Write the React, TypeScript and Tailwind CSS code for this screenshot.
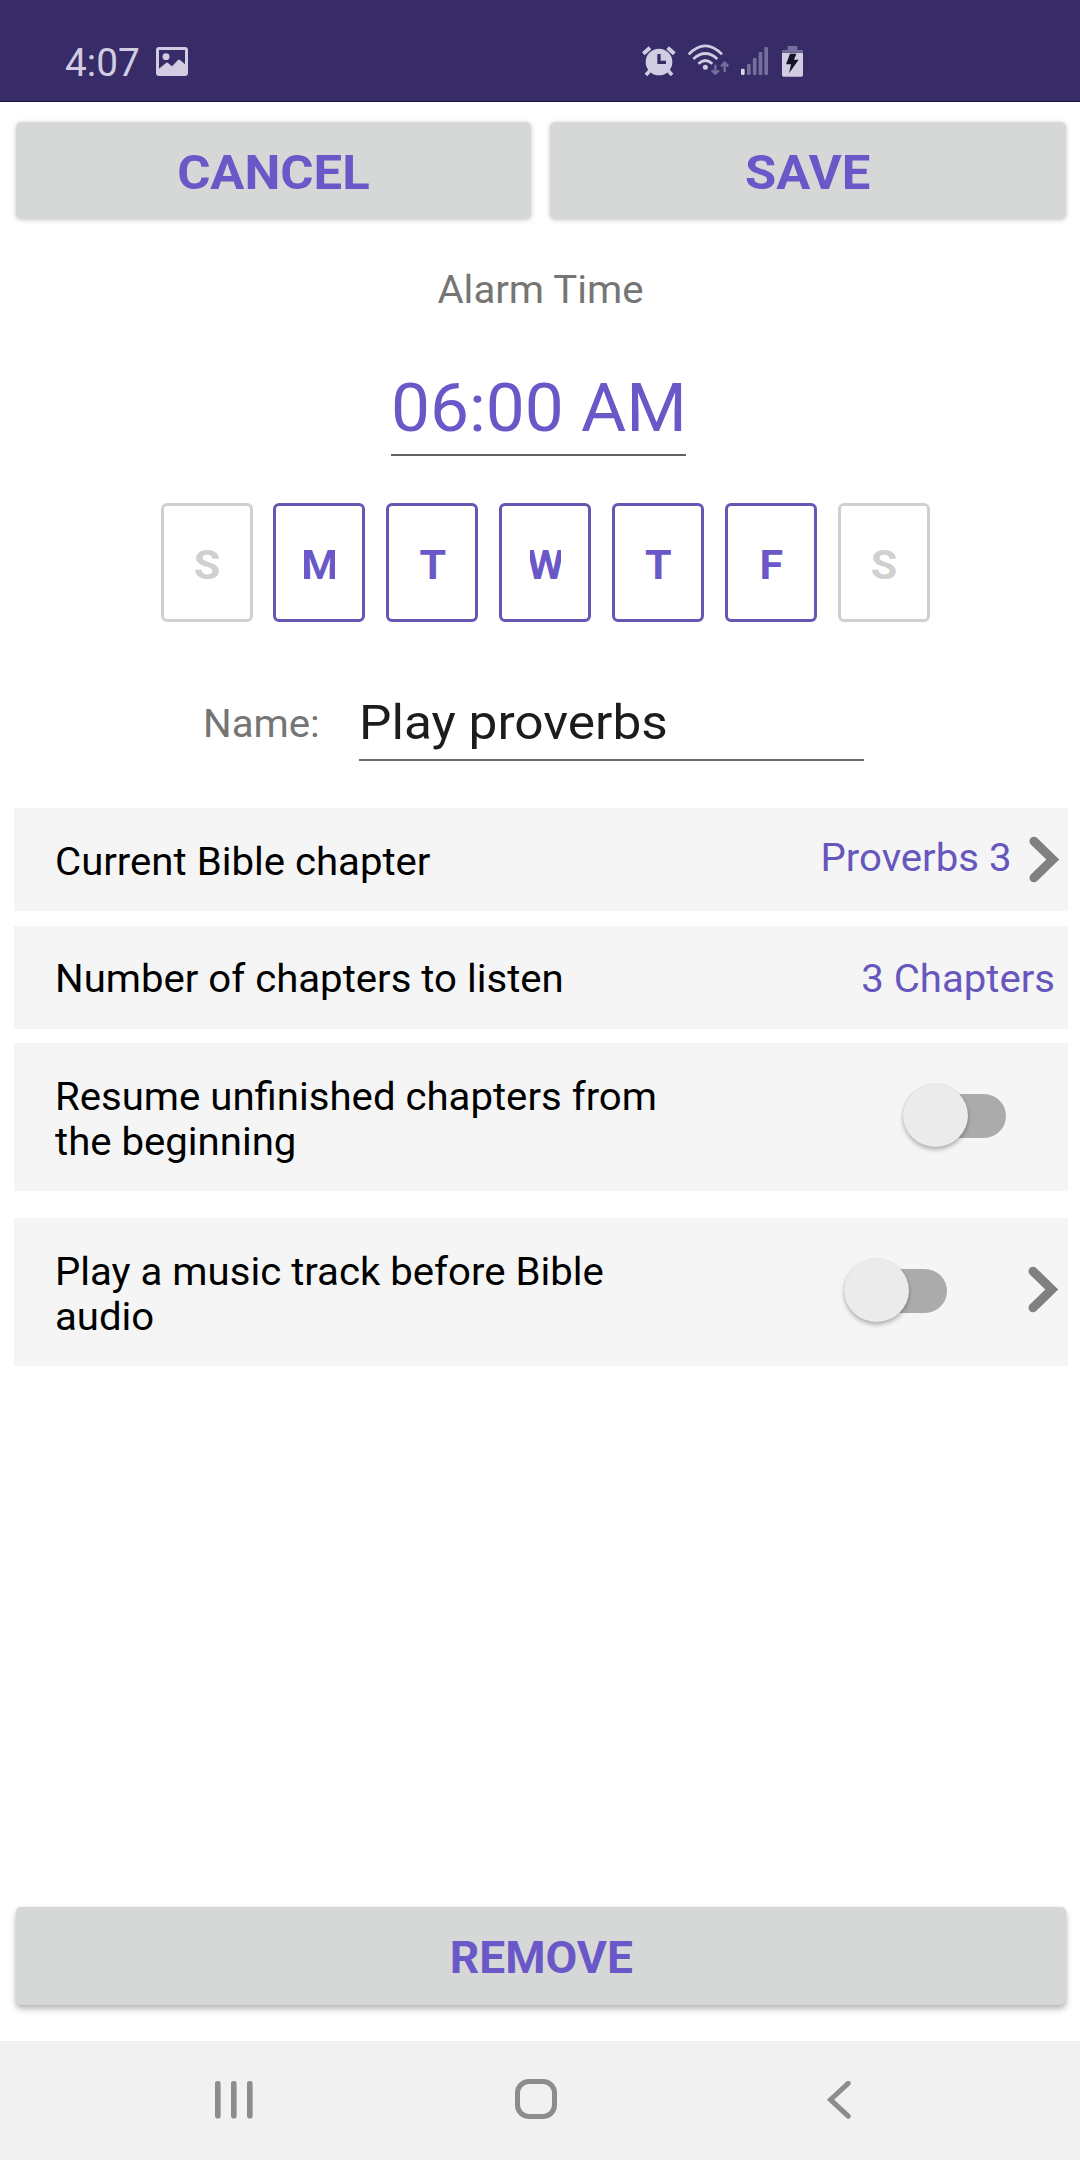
import React from "react";

const days = [
  { letter: "S", on: false },
  { letter: "M", on: true },
  { letter: "T", on: true },
  { letter: "W", on: true },
  { letter: "T", on: true },
  { letter: "F", on: true },
  { letter: "S", on: false },
];

function StatusBar() {
  return (
    <header className="flex h-[102px] shrink-0 items-start border-b border-[#1d1248] bg-[#372c67] pt-[30px] pl-[65px]">
      <span className="w-[91px] scale-y-[0.98] text-[38.8px] leading-[66px] text-[#d1cce1]">4:07</span>
      <svg className="mt-[17px] h-[29px] w-8" viewBox="0 0 32 29" fill="none">
        <rect x="1.5" y="1.5" width="29" height="26" rx="1.5" stroke="#d1cce1" strokeWidth="3" />
        <ellipse cx="10" cy="9.7" rx="3.5" ry="3.4" fill="#d1cce1" />
        <path d="M2 22.5 10 16 Q11 15.2 12 16 L16 19.3 22 13 Q23 12.2 24 13 L30 18 V27.5 H2 Z" fill="#d1cce1" />
      </svg>
      <svg className="ml-[432px] h-[60px] w-[200px]" viewBox="0 0 600 180" fill="none">
        <g stroke="#d1cce1">
          <path d="M70 71 90 53M163 71 143 53" strokeWidth="12" />
          <path d="M90 121 78 135M144 121 156 135" strokeWidth="11" />
        </g>
        <circle cx="117" cy="96" r="40" fill="#d1cce1" />
        <path d="M117 72V97H138" stroke="#372c67" strokeWidth="10" />
        <g stroke="#d1cce1" strokeWidth="8">
          <path d="M206 73Q256 22 306 73" />
          <path d="M220 87Q256 54 292 87" />
          <path d="M235 101Q256 82 277 101" />
        </g>
        <circle cx="256" cy="112" r="7.5" fill="#d1cce1" />
        <g stroke="#776f9b" strokeWidth="7">
          <path d="M286 104V131M275 121 286 131 297 121" />
          <path d="M314 126V99M303 109 314 98 325 109" />
        </g>
        <rect x="363" y="116" width="11" height="19" rx="4" fill="#d9d4e8" />
        <g fill="#776f9b">
          <rect x="381" y="101" width="11" height="34" rx="4" />
          <rect x="398.5" y="84" width="11" height="51" rx="4" />
          <rect x="416" y="66" width="11" height="69" rx="4" />
          <rect x="433" y="51" width="11" height="84" rx="4" />
          <path d="M503 48H532V60H546Q549 60 549 64V68H486V64Q486 60 489 60H503Z" />
        </g>
        <path d="M486 69H549V135Q549 140 544 140H491Q486 140 486 135Z" fill="#d1cce1" />
        <path d="M510 71H529L522 89H536L507 130 513 103H498Z" fill="#15122a" />
      </svg>
    </header>
  );
}

function Chevron({ className }: { className: string }) {
  return (
    <svg className={`${className} h-[47px] w-[31px]`} viewBox="0 0 31 47" fill="none">
      <path d="M5 5.2 23.8 23.5 5 41.8" stroke="#808080" strokeWidth="9" strokeLinecap="round" strokeLinejoin="miter" />
    </svg>
  );
}

function Switch({ className }: { className: string }) {
  return (
    <div className={`${className} grid h-[63px] w-[103px] items-center`}>
      <div className="col-start-1 row-start-1 ml-[14px] h-11 rounded-full bg-[#ababab]" />
      <div className="col-start-1 row-start-1 h-[63px] w-[65px] rounded-[50%] bg-[#ebebeb] shadow-[0_3px_4px_rgba(0,0,0,0.26),0_0_2px_rgba(0,0,0,0.12)]" />
    </div>
  );
}

const topButton =
  "flex-1 rounded-[5px] bg-[#d6d8d7] pt-1.5 text-[50.8px] font-bold text-[#6a58c8] shadow-[0_1px_5px_rgba(0,0,0,0.22)]";
const label = "scale-y-[0.947] text-[40.15px] leading-[48px] text-black";
const value = "scale-y-[0.947] text-[40.15px] leading-[46px] text-[#6757bd]";
const row = "flex shrink-0 items-center bg-[#f5f5f5] pl-[41px]";

export default function App() {
  return (
    <div className="flex h-[2160px] w-[1080px] flex-col overflow-hidden bg-white font-[Roboto,sans-serif]">
      <StatusBar />

      <div className="mt-5 flex h-[97px] shrink-0 gap-[18.5px] pr-[14.5px] pl-[15.5px]">
        <button className={topButton}>
          <span className="block scale-y-[0.965]">CANCEL</span>
        </button>
        <button className={topButton}>
          <span className="block scale-y-[0.965]">SAVE</span>
        </button>
      </div>

      <div className="mt-[47px] h-[50px] shrink-0 scale-y-[0.947] pl-[1px] text-center text-[40.2px] leading-[50px] text-[#757575]">
        Alarm Time
      </div>

      <div className="mt-[47px] ml-[391px] h-[93px] w-[295px] shrink-0 border-b-2 border-[#626262]">
        <div className="scale-y-[0.947] text-[69.4px] leading-[92px] whitespace-nowrap text-[#6a58c8]">06:00 AM</div>
      </div>

      <div className="mt-[47px] ml-[160.6px] flex h-[119px] w-[769px] shrink-0 justify-between">
        {days.map((d, i) => (
          <div
            key={i}
            className={`flex w-[92px] items-center justify-center rounded-[6px] border-[3px] pt-1 pl-[1px] ${d.on ? "border-[#6757b5] text-[#6a58c8]" : "border-[#d0d0d0] text-[#d0d0d0]"}`}
          >
            <span className="flex w-[31px] scale-y-[0.96] justify-center overflow-hidden text-[43px] leading-[50px] font-bold">
              {d.letter}
            </span>
          </div>
        ))}
      </div>

      <div className="mt-[71px] ml-[203px] flex h-[68px] shrink-0">
        <span className="mt-[6px] w-[156px] scale-y-[0.947] text-[40.2px] leading-[50px] text-[#757575]">Name:</span>
        <div className="w-[505px] border-b-2 border-[#6b6b6b]">
          <div className="scale-y-[0.95] text-[51.4px] leading-[60px] text-[#1c1c1c]">Play proverbs</div>
        </div>
      </div>

      <main className="mt-[47px] mr-3 ml-[14px] flex shrink-0 flex-col">
        <div className={`${row} h-[103px]`}>
          <div className={`${label} mt-1.5 flex-1`}>Current Bible chapter</div>
          <div className={`${value} mr-[17.5px] -mt-[1px]`}>Proverbs 3</div>
          <Chevron className="mr-[8px]" />
        </div>
        <div className={`${row} mt-[15px] h-[103px]`}>
          <div className={`${label} mt-[5px] flex-1`}>Number of chapters to listen</div>
          <div className={`${value} mt-[5px] mr-[13px]`}>3 Chapters</div>
        </div>
        <div className={`${row} mt-[14px] h-[148px]`}>
          <div className={`${label} mt-[5px] w-[620px]`}>
            Resume unfinished chapters from
            <br />
            the beginning
          </div>
          <Switch className="-mt-[3px] mr-[62.5px] ml-auto" />
        </div>
        <div className={`${row} mt-[27px] h-[148px]`}>
          <div className={`${label} mt-[5px] w-[620px]`}>
            Play a music track before Bible
            <br />
            audio
          </div>
          <Switch className="-mt-[3px] mr-[81.5px] ml-auto" />
          <Chevron className="-mt-[6px] mr-[9px]" />
        </div>
      </main>

      <button className="mt-auto mr-[14px] mb-[36px] ml-[15.5px] h-[98px] shrink-0 rounded-[5px] bg-[#d6d8d7] pt-[5px] pl-[1px] text-[46.1px] font-bold text-[#6a58c8] shadow-[0_4px_6px_rgba(0,0,0,0.28),0_0_2px_rgba(0,0,0,0.1)]">
        <span className="block scale-y-[0.947]">REMOVE</span>
      </button>

      <nav className="flex h-[119px] shrink-0 items-start bg-[#f1f1f1] pt-[38px] pl-[215px]">
        <svg className="mt-[2px] h-[38px] w-[38px]" viewBox="0 0 38 38" fill="#8c8c8c">
          <rect x="0" y="0" width="5.6" height="37.5" rx="2.5" />
          <rect x="16" y="0" width="5.6" height="37.5" rx="2.5" />
          <rect x="32" y="0" width="5.6" height="37.5" rx="2.5" />
        </svg>
        <svg className="ml-[262px] h-10 w-[42px]" viewBox="0 0 42 40" fill="none">
          <rect x="2.5" y="2.5" width="37" height="35" rx="11.5" ry="11.5" stroke="#8c8c8c" strokeWidth="5" />
        </svg>
        <svg className="mt-[2px] ml-[268.5px] h-[38px] w-[26px]" viewBox="0 0 26 38" fill="none">
          <path d="M22.2 2.3 4.5 18.7 22.2 35.2" stroke="#8c8c8c" strokeWidth="5" strokeLinecap="round" />
        </svg>
      </nav>
    </div>
  );
}
